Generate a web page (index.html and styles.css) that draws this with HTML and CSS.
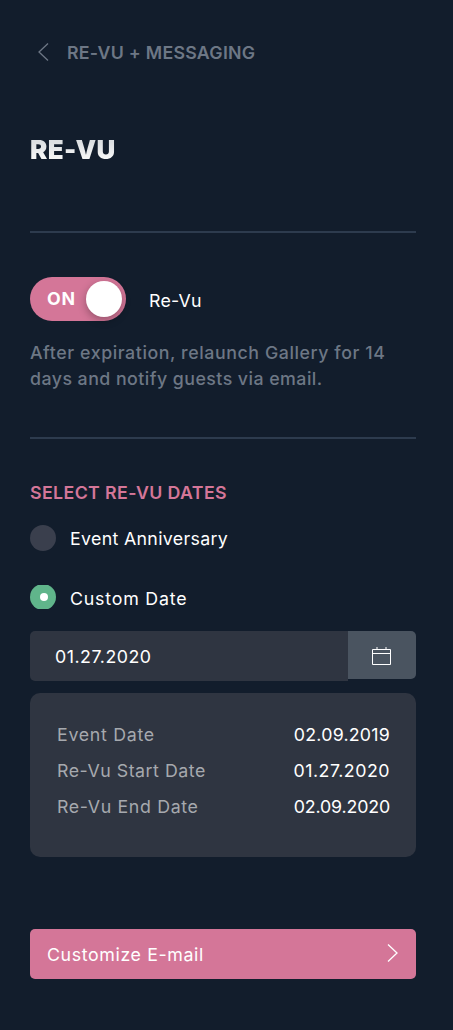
FILE: index.html
```html
<!DOCTYPE html>
<html lang="en">
<head>
    <meta charset="UTF-8" />
    <meta name="viewport" content="width=device-width, initial-scale=1.0" />
    <title>Re-Vu</title>
    <link rel="stylesheet" href="styles.css">
</head>
<body>
    <main class="page">
        <a class="back" href="#">
            <svg width="11" height="20" viewBox="0 0 11 20"><path d="M10 1.5 1 10 10 18.5" /></svg>
            <span class="back-text">RE-VU + MESSAGING</span>
        </a>
        <h1 class="title">RE-VU</h1>

        <section class="section toggle-section">
            <div class="toggle-row">
                <button type="button" class="toggle">
                    <span class="toggle-text">ON</span>
                    <span class="knob"></span>
                </button>
                <span class="toggle-label">Re-Vu</span>
            </div>
            <p class="info"><span class="info-first">After expiration, relaunch Gallery for 14</span><br><span class="info-second">days and notify guests via email.</span></p>
        </section>

        <section class="section dates-section">
            <h2 class="heading">SELECT RE-VU DATES</h2>
            <div class="option">
                <span class="radio"></span>
                <span class="option-text anniversary">Event Anniversary</span>
            </div>
            <div class="option selected">
                <svg class="radio-on" width="26" height="24" viewBox="0 0 26 24">
                    <circle cx="13" cy="12" r="13" fill="#60b58b" />
                    <circle cx="14" cy="12" r="4" fill="#fff" />
                </svg>
                <span class="option-text custom">Custom Date</span>
            </div>
            <div class="date-field">
                <div class="date-value"><span class="start-value">01.27.2020</span></div>
                <button type="button" class="calendar">
                    <svg width="19" height="18" viewBox="0 0 19 18">
                        <path d="M.5 2.5H18.5V17.5H.5Z" />
                        <path d="M.5 6.5H18.5M5 0V3M14 0V3" />
                    </svg>
                </button>
            </div>
            <dl class="summary">
                <div class="row"><dt class="event">Event Date</dt><dd class="event-value">02.09.2019</dd></div>
                <div class="row"><dt class="start">Re-Vu Start Date</dt><dd class="start-value">01.27.2020</dd></div>
                <div class="row"><dt class="end">Re-Vu End Date</dt><dd class="end-value">02.09.2020</dd></div>
            </dl>
        </section>

        <button type="button" class="customize">
            <span class="customize-text">Customize E-mail</span>
            <svg width="11" height="20" viewBox="0 0 11 20"><path d="M1 1.5 10 10 1 18.5" /></svg>
        </button>
    </main>
</body>
</html>
```
FILE: styles.css
```css
* {
    box-sizing: border-box;
}
body {
    margin: 0;
    background-color: #121d2c;
    color: #fff;
    font-family: Inter, "Open Sans", sans-serif;
    font-size: 17.8px;
    line-height: 25px;
    white-space: nowrap;
}
button {
    border: none;
    padding: 0;
    color: #fff;
    font: inherit;
}
svg {
    display: block;
    fill: none;
    stroke: #fff;
    stroke-width: 1.3;
}
.page {
    min-height: 1030px;
    padding: 40px 37px 0 30px;
}
.back {
    display: flex;
    gap: 18px;
    padding-left: 8px;
    color: #6d7785;
    font-weight: 600;
    text-decoration: none;
}
.back svg {
    margin-top: 2px;
    stroke: #6d7785;
}
.back-text {
    letter-spacing: 0.25px;
}
.title {
    margin: 72px 0 68px;
    width: max-content;
    background: linear-gradient(#dcdfe2 20%, #f5f6f6 80%);
    background-clip: text;
    -webkit-background-clip: text;
    color: transparent;
    font-size: 26px;
    font-weight: 900;
    line-height: 26px;
    letter-spacing: 0.3px;
}
.section {
    border-top: 2px solid #2d3b4e;
}
.toggle-section {
    height: 206px;
    padding-top: 44px;
}
.toggle-row {
    display: flex;
    gap: 23px;
}
.toggle {
    display: flex;
    align-items: center;
    justify-content: space-between;
    width: 96px;
    height: 44px;
    padding: 0 4px 0 17px;
    border-radius: 22px;
    background-color: #d47698;
    font-weight: 700;
}
.toggle-text {
    padding-bottom: 2px;
    letter-spacing: 0.9px;
}
.knob {
    width: 36px;
    height: 36px;
    border-radius: 50%;
    background-color: #fff;
    box-shadow: 0 3px 8px rgba(0, 0, 0, 0.3);
}
.toggle-label {
    padding-top: 11px;
    letter-spacing: 0.25px;
}
.info {
    margin: 19px 0 0;
    color: #6d7785;
    font-weight: 500;
    line-height: 26px;
}
.info-first {
    letter-spacing: 0.57px;
}
.info-second {
    letter-spacing: 0.45px;
}
.dates-section {
    padding-top: 41px;
}
.heading {
    margin: 0 0 20px;
    color: #d47698;
    font-size: 17.8px;
    font-weight: 600;
    letter-spacing: 0.37px;
}
.option {
    display: flex;
    gap: 14px;
    height: 26px;
}
.radio {
    width: 26px;
    height: 26px;
    border-radius: 50%;
    background-color: #3a3f4d;
}
.radio-on {
    stroke: none;
    overflow: hidden;
}
.option-text {
    padding-top: 1px;
}
.anniversary {
    letter-spacing: 0.32px;
}
.custom {
    letter-spacing: 0.8px;
}
.selected {
    height: 24px;
    margin: 34px 0 22px;
}
.date-field {
    display: flex;
    align-items: flex-start;
}
.date-value {
    width: 318px;
    height: 50px;
    padding: 13px 25px;
    border-radius: 5px 0 0 5px;
    background-color: #2f3541;
}
.calendar {
    display: grid;
    place-items: center;
    width: 68px;
    height: 48px;
    padding: 2px 1px 0 0;
    border-radius: 0 5px 5px 0;
    background-color: #4a5460;
}
.calendar svg {
    stroke-width: 1;
}
.summary {
    height: 164px;
    margin: 12px 0 72px;
    padding: 24px 26px 0 27px;
    border-radius: 10px;
    background-color: #2f3541;
    line-height: 36px;
}
.row {
    display: flex;
    justify-content: space-between;
    color: #a6a9ae;
}
.row dd {
    margin: 0;
    color: #fff;
}
.event {
    letter-spacing: 0.7px;
}
.start {
    letter-spacing: 0.52px;
}
.end {
    letter-spacing: 0.65px;
}
.event-value {
    letter-spacing: 0.22px;
}
.start-value {
    letter-spacing: 0.5px;
}
.end-value {
    letter-spacing: -0.15px;
}
.customize {
    display: flex;
    align-items: center;
    justify-content: space-between;
    width: 100%;
    height: 50px;
    padding: 0 18px 0 17px;
    border-radius: 5px;
    background-color: #d47698;
}
.customize svg {
    margin-bottom: 2px;
}
.customize-text {
    letter-spacing: 0.62px;
}
```
